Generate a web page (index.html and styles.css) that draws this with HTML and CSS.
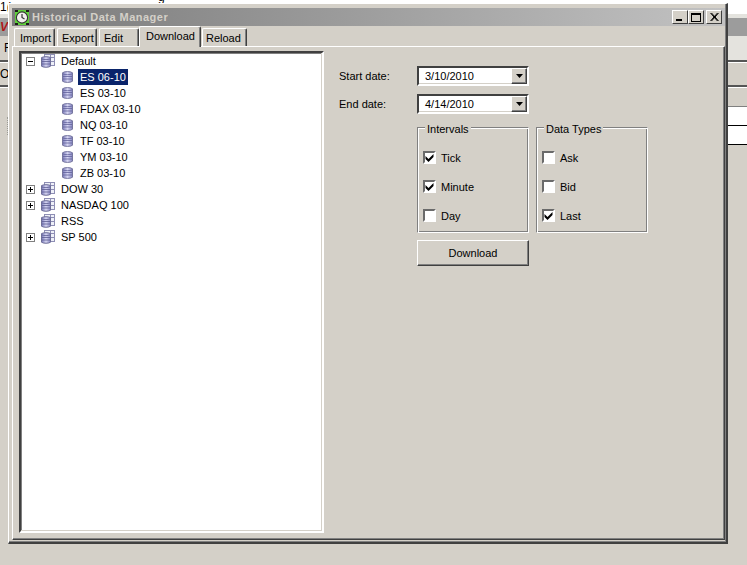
FILE: index.html
```html
<!DOCTYPE html>
<html lang="en">
<head>
<meta charset="utf-8">
<title>Historical Data Manager</title>
<link rel="stylesheet" href="styles.css">
</head>
<body>
<svg class="defs" width="0" height="0" aria-hidden="true">
  <defs>
    <linearGradient id="cyl" x1="0" x2="1" y1="0" y2="0">
      <stop offset="0" stop-color="#7878b8"/>
      <stop offset=".5" stop-color="#d6d6f2"/>
      <stop offset="1" stop-color="#8484c0"/>
    </linearGradient>
    <symbol id="db" viewBox="0 0 11 12">
      <path d="M.5 1.8 C2 .2 9 .2 10.5 1.8 V10.2 C9 11.8 2 11.8 .5 10.2 Z" fill="url(#cyl)" stroke="#77779f"/>
      <path d="M1 3 C3 3.9 8 3.9 10 3 M1 5.5 H10 M1 8 H10" fill="none" stroke="#62629a" stroke-width=".8"/>
    </symbol>
    <symbol id="dbset" viewBox="0 0 14 14">
      <rect x="3.5" y=".5" width="10" height="11" fill="#eef0f8" stroke="#8e8eb4"/>
      <path d="M9.5 .5 V11.5 M9.5 3.5 H13.5 M9.5 7.5 H13.5" stroke="#8e8eb4" fill="none"/>
      <path d="M.5 3.6 C2 2.4 8 2.4 9.5 3.6 V12.2 C8 13.6 2 13.6 .5 12.2 Z" fill="url(#cyl)" stroke="#6e6e98"/>
      <path d="M1 5 C3 5.8 7 5.8 9 5 M1 7.5 H9 M1 10 H9" fill="none" stroke="#5c5c90" stroke-width=".8"/>
    </symbol>
    <symbol id="tick" viewBox="0 0 9 9">
      <path d="M.5 3 L3.5 6 L8.5 1 V4 L3.5 9 L.5 6 Z" fill="#000"/>
    </symbol>
    <symbol id="arrow" viewBox="0 0 7 4">
      <path d="M0 0 H7 L3.5 4 Z" fill="#000"/>
    </symbol>
  </defs>
</svg>

<div class="backdrop">
  <div class="bg-row bg-top"><span>1(</span><span class="descender">g</span></div>
  <div class="bg-row bg-light"></div>
  <div class="bg-row bg-caption"><span class="red">V</span></div>
  <div class="bg-row bg-menu"><span>F</span></div>
  <div class="bg-row bg-tool"><span>Or</span></div>
  <div class="bg-row bg-head"><div class="fill fill-head"></div></div>
  <div class="bg-row bg-cell"><div class="fill fill-cell"></div></div>
  <div class="bg-row bg-cell"><div class="fill fill-cell"></div></div>
  <div class="bg-row bg-rest"></div>
  <div class="grip"></div>
</div>

<main class="window">
  <header class="titlebar">
    <svg class="app-icon" width="14" height="15" viewBox="0 0 14 15">
      <rect width="14" height="15" fill="#5fd03a"/>
      <path d="M0 0h3v2H0zM11 0h3v2h-3zM0 13h3v2H0zM11 13h3v2h-3z" fill="#1c1c18"/>
      <circle cx="7" cy="7.5" r="5.6" fill="#f0f0ec" stroke="#333" stroke-width="1.1"/>
      <path d="M7 4v3.5l2.5 1.5" fill="none" stroke="#333" stroke-width="1.2"/>
    </svg>
    <span class="title">Historical Data Manager</span>
    <div class="controls">
      <button class="ctl"><i class="g-min"></i></button>
      <button class="ctl"><i class="g-max"></i></button>
      <button class="ctl ctl-close">
        <svg width="9" height="8" viewBox="0 0 9 8"><path d="M.5 0 L7.5 8 M8.5 0 L1.5 8 M1.5 0 L8.5 8 M7.5 0 L.5 8" stroke="#000" fill="none"/></svg>
      </button>
    </div>
  </header>

  <nav class="tabs">
    <span class="tab t-import">Import</span>
    <span class="tab t-export">Export</span>
    <span class="tab t-edit">Edit</span>
    <span class="tab tab-active">Download</span>
    <span class="tab t-reload">Reload</span>
  </nav>

  <section class="panel">
    <div class="tree">
      <div class="node"><i class="exp"><b class="h"></b></i><svg class="ico-set"><use href="#dbset"/></svg><span>Default</span></div>
      <div class="leaf"><svg class="ico"><use href="#db"/></svg><span class="sel">ES 06-10</span></div>
      <div class="leaf"><svg class="ico"><use href="#db"/></svg><span>ES 03-10</span></div>
      <div class="leaf"><svg class="ico"><use href="#db"/></svg><span>FDAX 03-10</span></div>
      <div class="leaf"><svg class="ico"><use href="#db"/></svg><span>NQ 03-10</span></div>
      <div class="leaf"><svg class="ico"><use href="#db"/></svg><span>TF 03-10</span></div>
      <div class="leaf"><svg class="ico"><use href="#db"/></svg><span>YM 03-10</span></div>
      <div class="leaf"><svg class="ico"><use href="#db"/></svg><span>ZB 03-10</span></div>
      <div class="node"><i class="exp"><b class="h"></b><b class="v"></b></i><svg class="ico-set"><use href="#dbset"/></svg><span>DOW 30</span></div>
      <div class="node"><i class="exp"><b class="h"></b><b class="v"></b></i><svg class="ico-set"><use href="#dbset"/></svg><span>NASDAQ 100</span></div>
      <div class="node"><i class="exp exp-none"></i><svg class="ico-set"><use href="#dbset"/></svg><span>RSS</span></div>
      <div class="node"><i class="exp"><b class="h"></b><b class="v"></b></i><svg class="ico-set"><use href="#dbset"/></svg><span>SP 500</span></div>
    </div>

    <div class="form">
      <div class="date-row">
        <label>Start date:</label>
        <div class="date"><span>3/10/2010</span><i class="drop"><svg width="7" height="4"><use href="#arrow"/></svg></i></div>
      </div>
      <div class="date-row">
        <label>End date:</label>
        <div class="date"><span>4/14/2010</span><i class="drop"><svg width="7" height="4"><use href="#arrow"/></svg></i></div>
      </div>

      <div class="lower">
        <div class="groups">
          <div class="group">
            <span class="legend">Intervals</span>
            <div class="check"><i class="box"><svg width="9" height="9"><use href="#tick"/></svg></i>Tick</div>
            <div class="check"><i class="box"><svg width="9" height="9"><use href="#tick"/></svg></i>Minute</div>
            <div class="check"><i class="box"></i>Day</div>
          </div>
          <div class="group">
            <span class="legend">Data Types</span>
            <div class="check"><i class="box"></i>Ask</div>
            <div class="check"><i class="box"></i>Bid</div>
            <div class="check"><i class="box"><svg width="9" height="9"><use href="#tick"/></svg></i>Last</div>
          </div>
        </div>
        <button class="download">Download</button>
      </div>
    </div>
  </section>
</main>
</body>
</html>
```

FILE: styles.css
```css
* { box-sizing: border-box; }

html, body {
  margin: 0;
  padding: 0;
  height: 565px;
  overflow: hidden;
  background: #d4d0c8;
  font: 11px "Liberation Sans", Arial, sans-serif;
  color: #000;
}

.defs { position: absolute; }

i { display: block; font-style: normal; }

/* Application behind the dialog */
.backdrop { display: flex; flex-direction: column; height: 565px; }
.bg-row { display: flex; align-items: center; font-size: 12px; }
.bg-top { height: 14px; background: #fff; align-items: flex-end; position: relative; }
.descender { position: absolute; left: 158px; top: -10px; }
.bg-light { height: 4px; background: #e4e3de; }
.bg-caption { height: 18px; background: #9c9c9c; }
.red { color: #b01818; font-weight: bold; font-style: italic; }
.bg-menu { height: 26px; background: linear-gradient(90deg, #d4d0c8 0 8px, #e4e3de 8px); border-bottom: 2px solid #555; padding-left: 4px; }
.bg-tool { height: 25px; background: #d4d0c8; border-top: 1px solid #fff; border-bottom: 2px solid #555; }
.bg-head { height: 20px; background: #d4d0c8; border-top: 1px solid #fff; }
.bg-cell { height: 19px; background: #d4d0c8; }
.fill { margin-left: auto; width: 40px; align-self: stretch; }
.fill-head { border-bottom: 1px solid #808080; }
.fill-cell { background: #fff; border-bottom: 1px solid #000; }
.bg-rest { flex: 1; background: #d4d0c8; }
.grip { position: absolute; left: 7px; top: 117px; height: 18px; border-left: 1px dotted #9a9a94; }

/* Dialog */
.window {
  position: absolute;
  left: 8px;
  top: 3px;
  width: 720px;
  height: 541px;
  display: flex;
  flex-direction: column;
  padding: 4px 1px 2px 3px;
  background: #d4d0c8;
  border-left: 1px solid #fff;
  border-top: 1px solid #fff;
  border-right: 2px solid #404040;
  border-bottom: 2px solid #404040;
  box-shadow: inset -1px -1px 0 #808080;
}

.titlebar {
  height: 18px;
  flex: none;
  display: flex;
  align-items: center;
  padding: 0 2px 0 3px;
  background: linear-gradient(90deg, #7a7a7a, #c2c2c2);
}
.app-icon { flex: none; }
.title {
  margin-left: 3px;
  font-weight: bold;
  font-size: 11px;
  letter-spacing: .47px;
  color: #d4d0c8;
}
.controls { margin-left: auto; display: flex; margin-right: 1px; }
.ctl {
  width: 16px;
  height: 14px;
  padding: 0;
  display: flex;
  align-items: center;
  justify-content: center;
  background: #d4d0c8;
  border: 1px solid;
  border-color: #fff #404040 #404040 #fff;
}
.ctl-close { margin-left: 2px; }
.g-min { width: 6px; height: 2px; background: #000; margin-top: 6px; margin-right: 2px; }
.g-max { width: 10px; height: 9px; border: 1px solid #000; border-top-width: 2px; }

/* Tabs */
.tabs {
  height: 20px;
  flex: none;
  display: flex;
  align-items: flex-end;
  padding-left: 2px;
  position: relative;
  z-index: 1;
}
.tab {
  height: 18px;
  display: flex;
  align-items: center;
  border: 1px solid;
  border-color: #fff #404040 transparent #fff;
  border-bottom: none;
  border-radius: 2px 2px 0 0;
  box-shadow: inset -1px 0 0 #808080;
  padding-top: 1px;
}
.t-import { width: 41px; margin-right: 2px; padding-left: 5px; }
.t-export { width: 40px; margin-right: 2px; padding-left: 4px; }
.t-edit { width: 40px; padding-left: 4px; }
.t-reload { width: 45px; margin-left: 1px; padding-left: 3px; }
.tab-active {
  width: 62px;
  height: 21px;
  margin-bottom: -1px;
  padding: 0 0 3px 6px;
  background: #d4d0c8;
}

/* Panel */
.panel {
  flex: 1;
  display: flex;
  align-items: flex-start;
  padding: 4px 0 0 6px;
  border: 1px solid;
  border-color: #fff #404040 #404040 #fff;
  box-shadow: inset -1px -1px 0 #808080;
}

.tree {
  width: 305px;
  height: 482px;
  flex: none;
  background: #fff;
  border: 2px solid;
  border-color: #404040 #fff #fff #404040;
  box-shadow: inset -1px -1px 0 #d4d0c8, inset 1px 1px 0 #808080;
}
.node, .leaf {
  height: 16px;
  display: flex;
  align-items: center;
  white-space: nowrap;
}
.node { padding-left: 5px; }
.leaf { padding-left: 41px; }
.exp {
  width: 9px;
  height: 9px;
  position: relative;
  flex: none;
  background: #fff;
  border: 1px solid #808080;
}
.exp-none { border: none; background: none; }
.exp .h { position: absolute; left: 1px; top: 3px; width: 5px; height: 1px; background: #000; }
.exp .v { position: absolute; left: 3px; top: 1px; width: 1px; height: 5px; background: #000; }
.ico-set { width: 14px; height: 14px; margin: 0 6px; flex: none; }
.ico { width: 11px; height: 12px; margin-right: 5px; flex: none; }
.leaf span { padding: 0 2px; height: 16px; line-height: 16px; }
.sel { background: #0a246a; color: #fff; }

/* Form */
.form { margin: 15px 0 0 15px; width: 309px; }
.date-row { display: flex; align-items: center; height: 20px; margin-bottom: 8px; }
.date-row label { width: 78px; flex: none; }
.date {
  width: 112px;
  height: 20px;
  display: flex;
  align-items: center;
  justify-content: space-between;
  padding-left: 6px;
  background: #fff;
  border: 2px solid;
  border-color: #404040 #fff #fff #404040;
  box-shadow: inset -1px -1px 0 #d4d0c8;
}
.drop {
  width: 16px;
  height: 16px;
  display: flex;
  align-items: center;
  justify-content: center;
  background: #d4d0c8;
  border: 1px solid;
  border-color: #fff #404040 #404040 #fff;
  box-shadow: inset -1px -1px 0 #808080;
}
.lower { margin: 13px 0 0 78px; }
.groups { display: flex; gap: 7px; }
.group {
  width: 112px;
  height: 106px;
  flex: none;
  position: relative;
  display: flex;
  flex-direction: column;
  gap: 16px;
  padding: 23px 0 0 5px;
  border: 1px solid #808080;
  border-right-color: #fff;
  border-bottom-color: #fff;
  box-shadow: inset 1px 1px 0 #fff, inset -1px -1px 0 #808080;
}
.legend {
  position: absolute;
  left: 7px;
  top: -5px;
  padding: 0 2px;
  line-height: 13px;
  background: #d4d0c8;
}
.check { display: flex; align-items: center; height: 13px; gap: 5px; }
.box {
  width: 13px;
  height: 13px;
  flex: none;
  display: flex;
  align-items: center;
  justify-content: center;
  background: #fff;
  border: 2px solid;
  border-color: #6a6a6a #fff #fff #6a6a6a;
}
.download {
  display: block;
  width: 112px;
  height: 26px;
  margin-top: 7px;
  padding: 0;
  font: inherit;
  color: #000;
  background: #d4d0c8;
  border: 1px solid;
  border-color: #fff #404040 #404040 #fff;
  box-shadow: inset -1px -1px 0 #808080;
}
```
